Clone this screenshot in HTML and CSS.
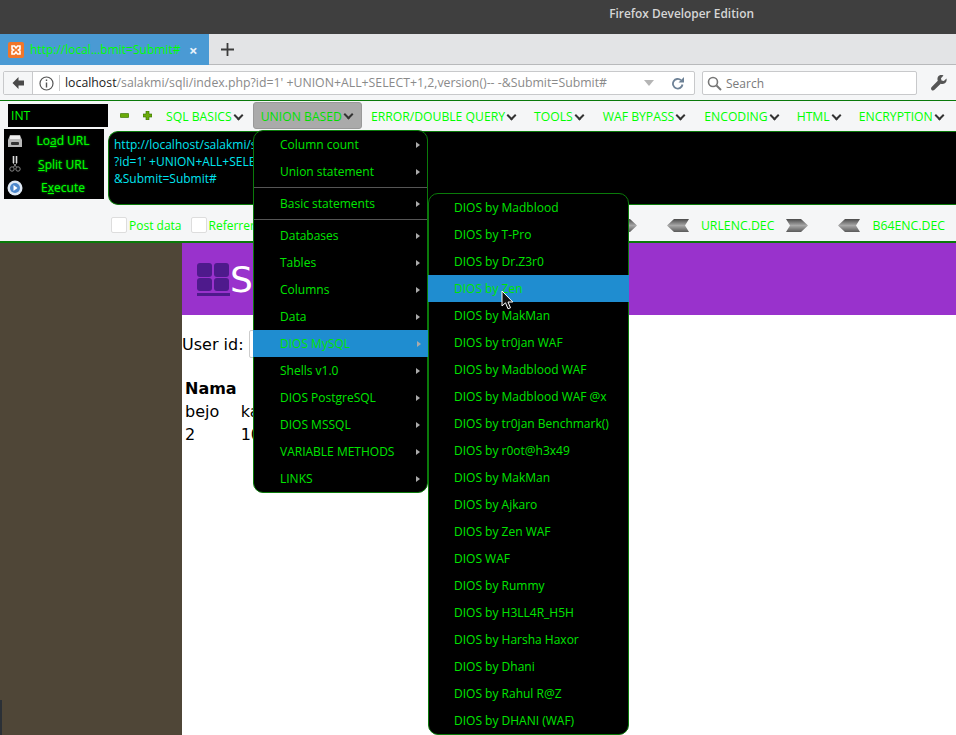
FILE: index.html
```html
<!DOCTYPE html>
<html lang="en">

<head>
    <meta charset="UTF-8" />
    <title>Firefox Developer Edition</title>
    <link rel="stylesheet" href="styles.css">
</head>

<body>
    <div class="titlebar">Firefox Developer Edition</div>

    <div class="tabstrip">
        <div class="tab">
            <svg class="tab-icon" width="16" height="16" viewBox="0 0 16 16">
                <rect width="16" height="16" rx="2" fill="#f0762a" />
                <path d="M4 4h2.500l1.500 2 1.500-2h2.500v3l-1.500 1 1.500 1v3h-2.500l-1.500-2-1.500 2h-2.500v-3l1.500-1-1.500-1z" fill="none" stroke="#fff" stroke-width="1.600" />
            </svg>
            <span class="tab-title">http://local...bmit=Submit#</span>
            <span class="tab-close">×</span>
        </div>
        <div class="newtab">
            <svg width="13" height="13" viewBox="0 0 13 13"><path d="M6.500 0v13M0 6.500h13" stroke="#3c3c3c" stroke-width="1.800" /></svg>
        </div>
    </div>

    <div class="navbar">
        <div class="urlbar">
            <div class="back">
                <svg width="14" height="14" viewBox="0 0 14 14"><path d="M7.500 1 1.500 7l6 6V9.500H13v-5H7.500z" fill="#4a4a4a" /></svg>
            </div>
            <svg class="info" width="15" height="15" viewBox="0 0 15 15">
                <circle cx="7.500" cy="7.500" r="6.500" fill="none" stroke="#555" stroke-width="1.200" />
                <path d="M7.500 6.500v5M7.500 3.500v1.600" stroke="#555" stroke-width="1.400" />
            </svg>
            <div class="url"><b>localhost</b>/salakmi/sqli/index.php?id=1' +UNION+ALL+SELECT+1,2,version()-- -&amp;Submit=Submit#</div>
            <span class="url-drop"></span>
            <svg class="reload" width="14" height="14" viewBox="0 0 14 14">
                <path d="M11.500 8.500a4.800 4.800 0 1 1-1.500-4.300" fill="none" stroke="#6d8196" stroke-width="1.800" />
                <path d="M13 1v5.500H7.500z" fill="#6d8196" />
            </svg>
        </div>
        <div class="searchbar">
            <svg width="15" height="15" viewBox="0 0 15 15">
                <circle cx="6" cy="6" r="4.500" fill="none" stroke="#777" stroke-width="1.600" />
                <path d="m9.500 9.500 4.500 4.500" stroke="#777" stroke-width="2" />
            </svg>
            <span>Search</span>
        </div>
        <svg class="wrench" width="16" height="16" viewBox="0 0 16 16">
            <path d="M15.500 3.500 12.800 6 10.500 5.500 10 3.200 12.500.5C10.500-.3 8-.1 7 1.700 6.300 3 6.300 4.500 6.800 5.700L.7 12c-.9.900-.9 2.100-.1 2.900.8.800 2 .8 2.900-.1l6.200-6.100c1.300.5 3 .4 4.200-.5 1.500-1.200 2-3 1.600-4.700z" fill="#555" />
        </svg>
    </div>

    <div class="hackbar">
        <div class="hb-menu">
            <div class="hb-type">INT</div>
            <span class="hb-sign">
                <svg width="9" height="9" viewBox="0 0 9 9"><rect y="2.500" width="9" height="4" rx="1" fill="#6aaa0a" stroke="#2f6b00" stroke-width=".6" /></svg>
            </span>
            <span class="hb-sign">
                <svg width="9" height="9" viewBox="0 0 9 9"><path d="M3 0h3v3h3v3H6v3H3V6H0V3h3z" fill="#6aaa0a" stroke="#2f6b00" stroke-width=".6" /></svg>
            </span>
            <span class="hb-item hb-first hb-wide">SQL BASICS<i class="chev"></i></span>
            <span class="hb-item hb-active">UNION BASED<i class="chev"></i></span>
            <span class="hb-item">ERROR/DOUBLE QUERY<i class="chev"></i></span>
            <span class="hb-item hb-wide">TOOLS<i class="chev"></i></span>
            <span class="hb-item hb-wide">WAF BYPASS<i class="chev"></i></span>
            <span class="hb-item">ENCODING<i class="chev"></i></span>
            <span class="hb-item">HTML<i class="chev"></i></span>
            <span class="hb-item">ENCRYPTION<i class="chev"></i></span>
        </div>

        <div class="hb-main">
            <div class="hb-buttons">
                <div class="hb-btn">
                    <svg width="16" height="16" viewBox="0 0 16 16">
                        <path d="M3 2h10l2 5v7H1V7z" fill="#b9b9b9" />
                        <rect x="4" y="9" width="8" height="3" rx="1" fill="#333" />
                        <rect x="3" y="3" width="10" height="3" fill="#eee" />
                    </svg>
                    <span>Lo<u>a</u>d URL</span>
                </div>
                <div class="hb-btn">
                    <svg width="16" height="16" viewBox="0 0 16 16">
                        <path d="M6.500 0v7M9.500 0v7" stroke="#ddd" stroke-width="1.600" />
                        <path d="M6 7 9.500 11M10 7 6.500 11" stroke="#999" stroke-width="1" />
                        <circle cx="5" cy="13" r="2.200" fill="none" stroke="#888" />
                        <circle cx="11" cy="13" r="2.200" fill="none" stroke="#888" />
                    </svg>
                    <span><u>S</u>plit URL</span>
                </div>
                <div class="hb-btn">
                    <svg width="16" height="16" viewBox="0 0 16 16">
                        <circle cx="8" cy="8" r="7.500" fill="#dfe9f5" />
                        <circle cx="8" cy="8" r="5" fill="#4e88cc" />
                        <path d="M6.500 5v6l4-3z" fill="#fff" />
                    </svg>
                    <span>E<u>x</u>ecute</span>
                </div>
            </div>
            <div class="hb-url">http://localhost/salakmi/sqli/index.php<br>?id=1' +UNION+ALL+SELECT+1,2,version()-- -<br>&amp;Submit=Submit#</div>
        </div>

        <div class="hb-options">
            <label class="hb-check"><i></i>Post data</label>
            <label class="hb-check"><i></i>Referrer</label>
            <span class="hb-enc hb-enc-first">
                <svg class="arrow" width="22" height="13" viewBox="0 0 22 13"><use href="#arrow-right" /></svg>
            </span>
            <span class="hb-enc">
                <svg class="arrow" width="22" height="13" viewBox="0 0 22 13"><use href="#arrow-left" /></svg>
                <span>URLENC.DEC</span>
                <svg class="arrow" width="22" height="13" viewBox="0 0 22 13"><use href="#arrow-right" /></svg>
            </span>
            <span class="hb-enc">
                <svg class="arrow" width="22" height="13" viewBox="0 0 22 13"><use href="#arrow-left" /></svg>
                <span>B64ENC.DEC</span>
            </span>
        </div>
    </div>

    <svg class="defs" width="0" height="0">
        <defs>
            <linearGradient id="steel" x1="0" y1="0" x2="0" y2="1">
                <stop offset="0" stop-color="#4a4a4a" />
                <stop offset=".5" stop-color="#a8a8a8" />
                <stop offset="1" stop-color="#5a5a5a" />
            </linearGradient>
            <path id="arrow-left" d="M7 0h15l-4 6.500 4 6.500H7L0 6.500z" fill="url(#steel)" />
            <path id="arrow-right" d="M0 0h15l7 6.500-7 6.500H0l4-6.500z" fill="url(#steel)" />
        </defs>
    </svg>

    <div class="viewport">
        <div class="side"><span class="side-edge"></span></div>
        <div class="page">
            <div class="page-head">
                <svg width="33" height="33" viewBox="0 0 33 33">
                    <rect x="0" y="0" width="15" height="14" rx="3" fill="#4e1a8c" />
                    <rect x="17" y="0" width="15" height="14" rx="3" fill="#4e1a8c" />
                    <rect x="0" y="15" width="15" height="13" rx="3" fill="#4e1a8c" />
                    <rect x="17" y="15" width="15" height="13" rx="3" fill="#4e1a8c" />
                    <rect x="0" y="30" width="33" height="3" fill="#4e1a8c" />
                </svg>
                <span>SQL Injection</span>
            </div>
            <div class="page-form">User id: <input class="page-input" type="text"></div>
            <table class="page-table">
                <tr><th>Nama</th><th></th></tr>
                <tr><td>bejo</td><td>kampung</td></tr>
                <tr><td>2</td><td>10.1.26</td></tr>
            </table>
        </div>
    </div>

    <ul class="dropdown dropdown-union">
        <li class="has-sub">Column count</li>
        <li class="has-sub">Union statement</li>
        <li class="sep"></li>
        <li class="has-sub">Basic statements</li>
        <li class="sep"></li>
        <li class="has-sub">Databases</li>
        <li class="has-sub">Tables</li>
        <li class="has-sub">Columns</li>
        <li class="has-sub">Data</li>
        <li class="has-sub on">DIOS MySQL</li>
        <li class="has-sub">Shells v1.0</li>
        <li class="has-sub">DIOS PostgreSQL</li>
        <li class="has-sub">DIOS MSSQL</li>
        <li class="has-sub">VARIABLE METHODS</li>
        <li class="has-sub">LINKS</li>
    </ul>

    <ul class="dropdown dropdown-dios">
        <li>DIOS by Madblood</li>
        <li>DIOS by T-Pro</li>
        <li>DIOS by Dr.Z3r0</li>
        <li class="on">DIOS by Zen</li>
        <li>DIOS by MakMan</li>
        <li>DIOS by tr0jan WAF</li>
        <li>DIOS by Madblood WAF</li>
        <li>DIOS by Madblood WAF @x</li>
        <li>DIOS by tr0jan Benchmark()</li>
        <li>DIOS by r0ot@h3x49</li>
        <li>DIOS by MakMan</li>
        <li>DIOS by Ajkaro</li>
        <li>DIOS by Zen WAF</li>
        <li>DIOS WAF</li>
        <li>DIOS by Rummy</li>
        <li>DIOS by H3LL4R_H5H</li>
        <li>DIOS by Harsha Haxor</li>
        <li>DIOS by Dhani</li>
        <li>DIOS by Rahul R@Z</li>
        <li>DIOS by DHANI (WAF)</li>
    </ul>

    <svg class="cursor" width="13" height="20" viewBox="0 0 13 20">
        <path d="M1 1v15l3.500-3.200 2.500 6 2.500-1-2.500-5.800h4.800z" fill="#111" stroke="#fff" stroke-width="1" />
    </svg>
</body>

</html>
```

FILE: styles.css
```css
* {
    box-sizing: border-box;
}

html,
body {
    margin: 0;
    height: 735px;
    overflow: hidden;
}

body {
    position: relative;
    font-family: "Open Sans", "Noto Sans", sans-serif;
    font-size: 12px;
    background: #fff;
    display: flex;
    flex-direction: column;
}

.titlebar {
    height: 34px;
    flex-shrink: 0;
    background: #3f3f3f;
    color: #d6d6d6;
    font-weight: 600;
    font-size: 11.900px;
    line-height: 27px;
    text-align: right;
    padding-right: 202px;
}

.tabstrip {
    height: 31px;
    flex-shrink: 0;
    display: flex;
    background: #e3e4e6;
    border-bottom: 1px solid #b8b9bb;
}

.tab {
    width: 209px;
    height: 31px;
    background: #4a9ad4;
    display: flex;
    align-items: center;
    padding-left: 8px;
}

.tab-title {
    color: #00ff00;
    font-size: 12px;
    margin-left: 6px;
    width: 153px;
    white-space: nowrap;
    overflow: hidden;
}

.tab-close {
    color: #e6f2fb;
    font-weight: 700;
    font-size: 15px;
    margin-left: 6px;
}

.newtab {
    display: flex;
    align-items: center;
    padding-left: 12px;
}

.navbar {
    height: 36px;
    flex-shrink: 0;
    display: flex;
    align-items: center;
    background: #f5f6f7;
    border-bottom: 1px solid #0a7a0a;
    padding: 1px 8px 0 3px;
}

.urlbar {
    width: 692px;
    height: 24px;
    display: flex;
    align-items: center;
    background: #fff;
    border: 1px solid #c8c9cb;
    border-radius: 2px;
}

.back {
    width: 29px;
    height: 22px;
    display: flex;
    align-items: center;
    justify-content: center;
    border-right: 1px solid #c8c9cb;
    background: #f5f6f7;
}

.info {
    margin-left: 6px;
}

.url {
    margin-left: 5px;
    padding-left: 5px;
    border-left: 1px solid #ccc;
    width: 583px;
    line-height: 16px;
    white-space: nowrap;
    overflow: hidden;
    color: #8a8a8a;
    font-size: 12.300px;
}

.url b {
    font-weight: 400;
    color: #222;
}

.url-drop {
    width: 0;
    height: 0;
    border-left: 5px solid transparent;
    border-right: 5px solid transparent;
    border-top: 6px solid #b5b5b5;
    margin-left: 2px;
}

.reload {
    margin-left: 17px;
}

.searchbar {
    width: 215px;
    height: 24px;
    margin-left: 7px;
    display: flex;
    align-items: center;
    gap: 4px;
    padding-left: 4px;
    background: #fff;
    border: 1px solid #c8c9cb;
    border-radius: 2px;
    color: #7a7a7a;
    font-size: 12px;
}

.wrench {
    margin-left: 14px;
}

.hackbar {
    flex-shrink: 0;
    background: #f5f6f7;
    color: #00ff00;
    border-bottom: 2px solid #0a7a0a;
    height: 142px;
}

.hb-menu {
    height: 28px;
    display: flex;
    align-items: flex-end;
    padding-left: 8px;
    white-space: nowrap;
    font-size: 12.200px;
}

.hb-type {
    width: 100px;
    height: 23px;
    line-height: 23px;
    background: #000;
    padding-left: 3px;
    margin: 0 6px 2px 0;
}

.hb-sign {
    width: 9px;
    display: flex;
    margin: 0 8px 9px 6px;
}

.hb-item {
    height: 27px;
    padding: 2px 9px 0;
    display: flex;
    align-items: center;
}

.hb-wide {
    padding-right: 10px;
}

.hb-first {
    margin-left: -3px;
}

.hb-active {
    background: #aaaaaa;
    border: 1px solid #999;
    border-radius: 3px;
    color: #00e000;
    padding: 1px 8px 0 7px;
}

.chev {
    width: 7px;
    height: 7px;
    border-right: 2px solid #333;
    border-bottom: 2px solid #333;
    transform: rotate(45deg);
    margin: -3px 1px 0 3px;
}

.hb-main {
    display: flex;
    padding-left: 4px;
    height: 75px;
}

.hb-buttons {
    width: 100px;
    height: 70px;
    background: #000;
    padding-left: 3px;
}

.hb-btn {
    height: 23.500px;
    display: flex;
    align-items: center;
}

.hb-btn span {
    flex: 1;
    text-align: center;
    text-shadow: 0 0 2px #00c800;
    padding-right: 1px;
}

.hb-url {
    flex: 1;
    height: 74px;
    margin: 2px 0 0 4px;
    background: #000;
    color: #00e5f0;
    border: 1px solid #0a7a0a;
    border-right: 0;
    border-radius: 10px 0 0 10px;
    padding: 4px 5px;
    line-height: 17px;
}

.hb-options {
    display: flex;
    align-items: center;
    height: 37px;
    padding: 5px 0 0 111px;
    white-space: nowrap;
    font-size: 12.300px;
}

.hb-check {
    display: flex;
    align-items: center;
    gap: 2px;
    margin-right: 9px;
    font-size: 12px;
}

.hb-check i {
    width: 16px;
    height: 16px;
    background: #fff;
    border: 1px solid #ddd;
    border-radius: 2px;
}

.hb-enc {
    display: flex;
    align-items: center;
    gap: 12px;
}

.hb-enc-first {
    margin-left: 351px;
    margin-right: 30px;
}

.hb-enc + .hb-enc + .hb-enc {
    margin-left: 30px;
}

.defs {
    position: absolute;
}

.viewport {
    flex: 1;
    display: flex;
    min-height: 0;
}

.side {
    width: 182px;
    position: relative;
    background: #4f4637;
}

.side-edge {
    position: absolute;
    left: 0;
    bottom: 0;
    width: 2px;
    height: 35px;
    background: #2b3036;
}

.page {
    flex: 1;
    font-family: "DejaVu Sans", sans-serif;
    font-size: 16px;
    color: #000;
}

.page-head {
    height: 72px;
    background: #9932cc;
    color: #fff;
    display: flex;
    align-items: center;
    padding-left: 15px;
    font-size: 36px;
    white-space: nowrap;
}

.page-form {
    margin-top: 17px;
    height: 24px;
    display: flex;
    align-items: center;
    gap: 5px;
}

.page-input {
    width: 200px;
    height: 28px;
    border: 1px solid #ccc;
    border-radius: 2px;
}

.page-table {
    margin-top: 20px;
    border-spacing: 2px;
}

.page-table th,
.page-table td {
    padding: 1px;
    text-align: left;
}

.dropdown {
    position: absolute;
    margin: 0;
    list-style: none;
    background: #000;
    color: #00e600;
    border: 1px solid #0a7a0a;
    border-radius: 10px;
    font-size: 12px;
    padding: 0;
}

.dropdown li {
    height: 27px;
    line-height: 28px;
    white-space: nowrap;
    position: relative;
}

.dropdown .on {
    background: #1f8dd0;
    margin: 0 -1px;
}

.dropdown .sep {
    height: 3px;
    margin-top: 2px;
    border-top: 1px solid #555;
}

.dropdown-union {
    left: 253px;
    top: 130px;
    width: 175px;
    height: 363px;
}

.dropdown-union li {
    padding-left: 26px;
}

.dropdown-union .on {
    padding-left: 27px;
}

.has-sub::after {
    content: "";
    position: absolute;
    right: 7px;
    top: 11px;
    border-left: 4px solid #aaa;
    border-top: 3px solid transparent;
    border-bottom: 3px solid transparent;
}

.dropdown-dios {
    left: 428px;
    top: 193px;
    width: 201px;
    height: 542px;
}

.dropdown-dios li {
    padding-left: 25px;
}

.dropdown-dios .on {
    padding-left: 26px;
}

.cursor {
    position: absolute;
    left: 501px;
    top: 290px;
}
```
